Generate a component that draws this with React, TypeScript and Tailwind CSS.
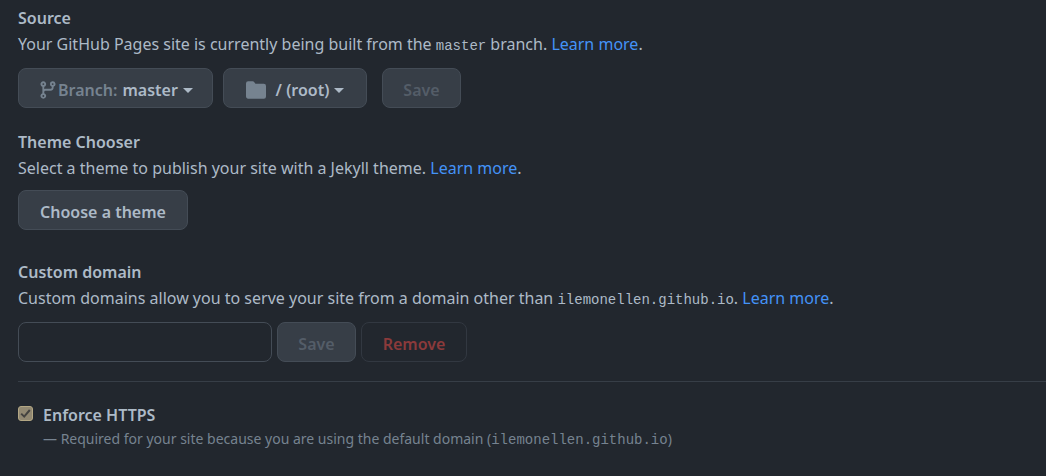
import React from "react";
import { clsx } from "clsx";

const HOST = "ilemonellen.github.io";

function BranchIcon() {
  return (
    <svg width="20" height="20" viewBox="0 0 16 16" fill="currentColor" aria-hidden="true" className="shrink-0">
      <path
        fillRule="evenodd"
        d="M11.75 2.5a.75.75 0 100 1.5.75.75 0 000-1.5zm-2.25.75a2.25 2.25 0 113 2.122V6A2.5 2.5 0 0110 8.5H6a1 1 0 00-1 1v1.128a2.251 2.251 0 11-1.5 0V5.372a2.25 2.25 0 111.5 0v1.836A2.492 2.492 0 016 7h4a1 1 0 001-1v-.628A2.25 2.25 0 019.5 3.25zM4.25 12a.75.75 0 100 1.5.75.75 0 000-1.5zM3.5 3.25a.75.75 0 111.5 0 .75.75 0 01-1.5 0z"
      />
    </svg>
  );
}

function FolderIcon() {
  return (
    <svg width="20" height="20" viewBox="0 0 16 16" fill="currentColor" aria-hidden="true" className="shrink-0">
      <path d="M1.75 1A1.75 1.75 0 000 2.75v10.5C0 14.216.784 15 1.75 15h12.5A1.75 1.75 0 0016 13.25v-8.5A1.75 1.75 0 0014.25 3h-6.5a.25.25 0 01-.2-.1l-.9-1.2c-.33-.44-.85-.7-1.4-.7h-3.5z" />
    </svg>
  );
}

function Caret() {
  return (
    <svg width="10" height="5" viewBox="0 0 10 5" fill="currentColor" aria-hidden="true" className="ml-[5px] shrink-0">
      <path d="M0 0h10L5 5z" />
    </svg>
  );
}

type ButtonProps = React.ButtonHTMLAttributes<HTMLButtonElement>;

function Button({ className, children, ...rest }: ButtonProps) {
  return (
    <button
      type="button"
      className={clsx(
        "flex h-10 items-center justify-center rounded-lg border pt-1 font-semibold whitespace-nowrap",
        className,
      )}
      {...rest}
    >
      {children}
    </button>
  );
}

function LearnMore() {
  return (
    <a href="#learn-more" className="text-[#4493f8] hover:underline">
      Learn more
    </a>
  );
}

function Code({ children }: { children: React.ReactNode }) {
  return <code className="font-['Liberation_Mono',monospace] text-[14px] leading-none">{children}</code>;
}

const filled = "border-[#444c56] bg-[#373e47] text-[#adbac7]";
const filledOff = "border-[#444c56] bg-[#373e47] text-[#545d68]";

export default function App() {
  return (
    <main className="min-h-screen bg-[#22272e] pt-[5px] pb-6 pl-[18px] font-['Noto_Sans','Open_Sans',sans-serif] text-base leading-[26px] text-[#adbac7]">
      <section>
        <h2 className="font-semibold">Source</h2>
        <p>
          Your GitHub Pages site is currently being built from the <Code>master</Code> branch. <LearnMore />.
        </p>
        <div className="mt-[11px] flex">
          <Button className={clsx(filled, "w-[195px]")} aria-haspopup="menu">
            <span className="flex items-center text-[#768390]">
              <BranchIcon />
              Branch:
            </span>
            <span className="ml-[5px]">master</span>
            <Caret />
          </Button>
          <Button className={clsx(filled, "ml-[10px] w-36")} aria-haspopup="menu">
            <span className="text-[#768390]">
              <FolderIcon />
            </span>
            <span className="ml-[10px]">/ (root)</span>
            <Caret />
          </Button>
          <Button disabled className={clsx(filledOff, "ml-[15px] w-[79px]")}>
            Save
          </Button>
        </div>
      </section>

      <section className="mt-[21px]">
        <h2 className="font-semibold">Theme Chooser</h2>
        <p>
          Select a theme to publish your site with a Jekyll theme. <LearnMore />.
        </p>
        <Button className={clsx(filled, "mt-[9px] w-[170px]")}>Choose a theme</Button>
      </section>

      <section className="mt-[29px]">
        <h2 className="font-semibold">
          <label htmlFor="domain">Custom domain</label>
        </h2>
        <p>
          Custom domains allow you to serve your site from a domain other than <Code>{HOST}</Code>. <LearnMore />.
        </p>
        <form className="mt-[11px] flex gap-[5px]">
          <input
            id="domain"
            type="text"
            className="h-10 w-[254px] rounded-lg border border-[#444c56] bg-[#22272e] px-4 outline-none focus:border-[#539bf5]"
          />
          <Button disabled className={clsx(filledOff, "w-[79px]")}>
            Save
          </Button>
          <Button disabled className="w-[106px] border-[#323841] text-[#8b3a3b]">
            Remove
          </Button>
        </form>
      </section>

      <hr className="mt-[19px] border-[#373e47]" />

      <section className="mt-5 flex gap-[10px]">
        <span className="relative mt-1 size-[15px] shrink-0">
          <input
            id="https"
            type="checkbox"
            defaultChecked
            disabled
            className="block size-[15px] appearance-none rounded-[3px] border border-[#b3a784] bg-[#918872]"
          />
          <svg
            viewBox="0 0 15 15"
            className="pointer-events-none absolute inset-0 size-[15px] text-[#444340]"
            fill="none"
            stroke="currentColor"
            strokeWidth="2"
            aria-hidden="true"
          >
            <path d="M3.2 7.6l3 3L11.8 4" />
          </svg>
        </span>
        <div>
          <label htmlFor="https" className="block font-semibold">
            Enforce HTTPS
          </label>
          <p className="text-[14px] leading-[22px] text-[#768390]">
            — Required for your site because you are using the default domain (<Code>{HOST}</Code>)
          </p>
        </div>
      </section>
    </main>
  );
}
